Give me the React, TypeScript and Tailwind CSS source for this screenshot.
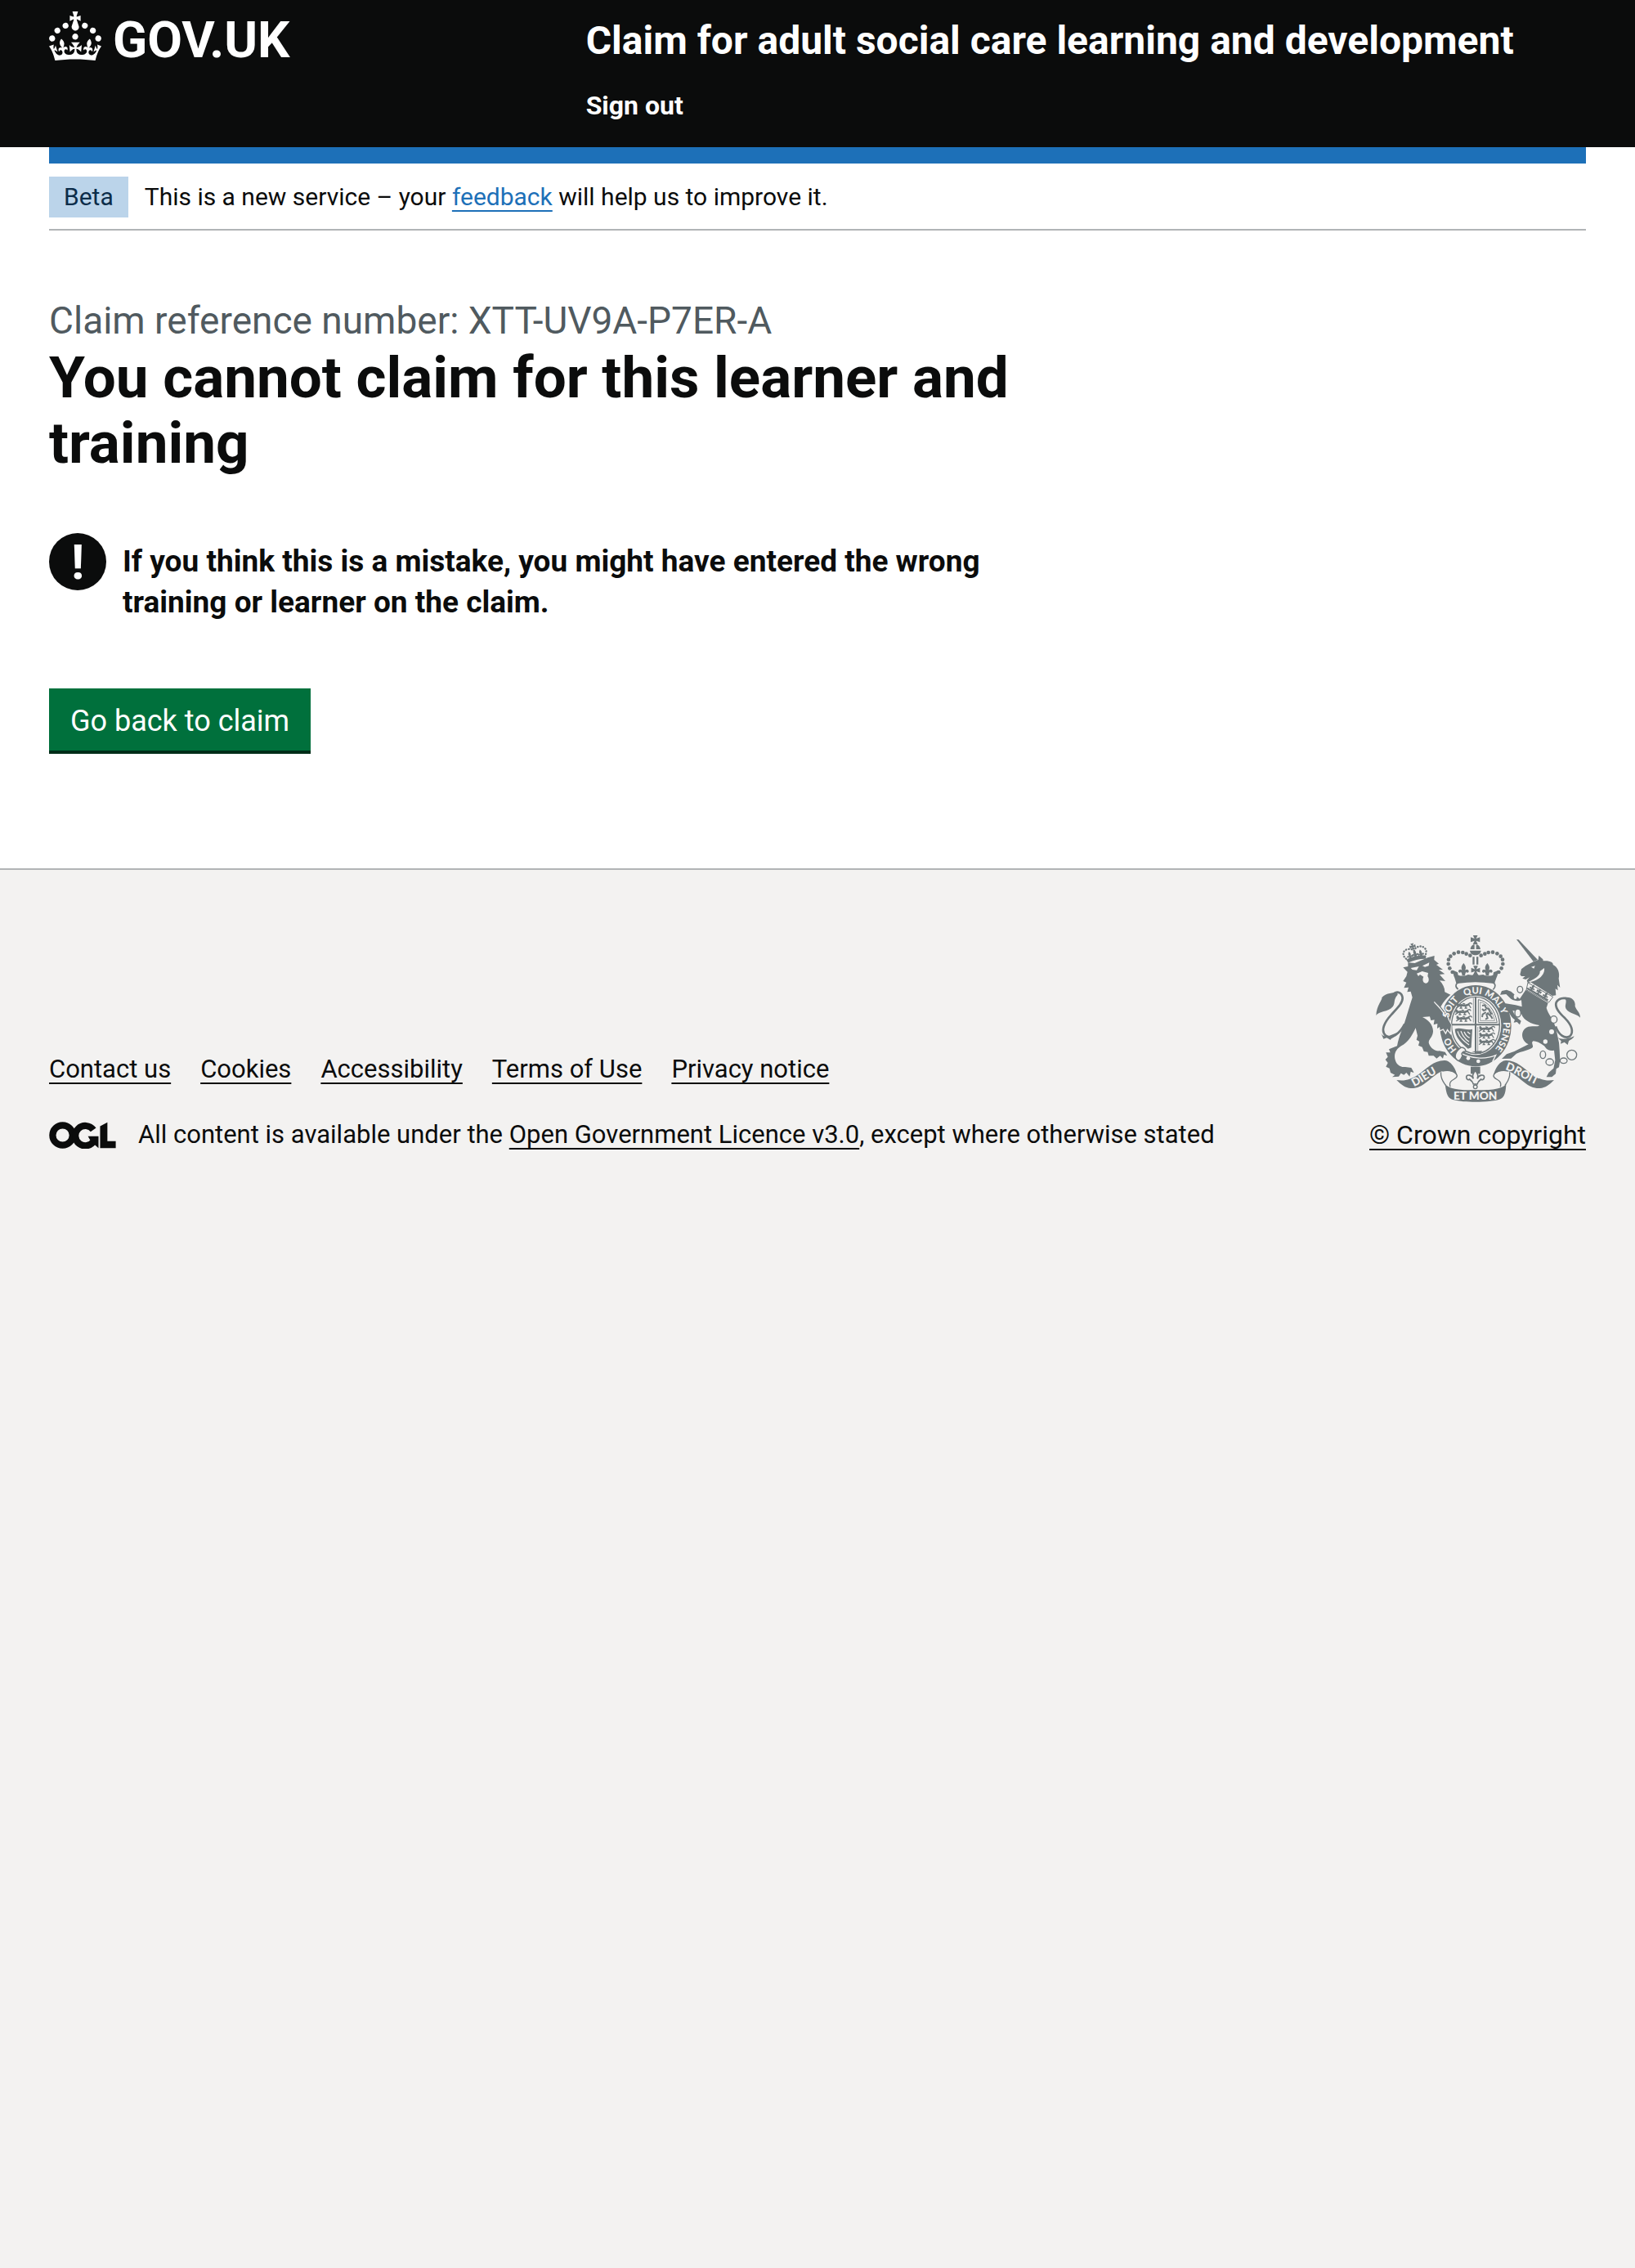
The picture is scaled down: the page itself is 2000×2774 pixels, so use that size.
import React from "react";

const INK = "#6e777a";
const PAPER = "#f3f2f1";

function CrownLogo() {
  return (
    <svg viewBox="0 0 32 30" className="h-[60px] w-16 shrink-0" fill="currentColor" aria-hidden="true">
      <path
        fillRule="evenodd"
        d="M22.6 10.4c-1 .4-2-.1-2.4-1-.4-.9.1-2 1-2.4.9-.4 2 .1 2.4 1s-.1 2-1 2.4m-5.9 6.7c-.9.4-2-.1-2.4-1-.4-.9.1-2 1-2.4.9-.4 2 .1 2.4 1s-.1 2-1 2.4m10.8-3.7c-1 .4-2-.1-2.4-1-.4-.9.1-2 1-2.4.9-.4 2 .1 2.4 1s0 2-1 2.4m3.3 4.8c-1 .4-2-.1-2.4-1-.4-.9.1-2 1-2.4.9-.4 2 .1 2.4 1s-.1 2-1 2.4M17 4.7l2.3 1.2V2.5l-2.3.7-.2-.2.9-3h-3.4l.9 3-.2.2c-.1.1-2.3-.7-2.3-.7v3.4L15 4.7c.1.1.1.2.2.2l-1.3 4c-.1.2-.1.4-.1.6 0 1.1.8 2 1.9 2.2h.7c1-.2 1.9-1.1 1.9-2.1 0-.2 0-.4-.1-.6l-1.3-4c-.1-.2 0-.2.1-.3m-7.6 5.7c.9.4 2-.1 2.4-1 .4-.9-.1-2-1-2.4-.9-.4-2 .1-2.4 1s0 2 1 2.4m-5 3c.9.4 2-.1 2.4-1 .4-.9-.1-2-1-2.4-.9-.4-2 .1-2.4 1s.1 2 1 2.4m-3.2 4.8c.9.4 2-.1 2.4-1 .4-.9-.1-2-1-2.4-.9-.4-2 .1-2.4 1s0 2 1 2.4m14.8 11c4.4 0 8.6.3 12.3.8 1.1-4.5 2.4-7 3.7-8.8l-2.5-.9c.2 1.3.3 1.9 0 2.7-.4-.4-.8-1.1-1.1-2.3l-1.2 4c.7-.5 1.3-.8 2-.9-1.1 2.5-2.6 3.1-3.5 3-1.1-.2-1.7-1.2-1.5-2.1.3-1.2 1.5-1.5 2.1-.1 1.1-2.3-.8-3-2-2.3 1.9-1.9 2.1-3.5.6-5.6-2.1 1.6-2.1 3.2-1.2 5.5-1.2-1.4-3.2-.6-2.5 1.6.9-1.4 2.1-.5 1.9.8-.2 1.1-1.7 2.1-3.5 1.9-2.7-.2-2.9-2.1-2.9-3.6.7-.1 1.9.5 2.9 1.9l.4-4.3c-1.1 1.1-2.1 1.4-3.2 1.4.4-1.2 2.1-3 2.1-3h-5.4s1.7 1.9 2.1 3c-1.1 0-2.1-.2-3.2-1.4l.4 4.3c1-1.4 2.2-2 2.9-1.9-.1 1.5-.2 3.4-2.9 3.6-1.9.2-3.4-.8-3.5-1.9-.2-1.3 1-2.2 1.9-.8.7-2.3-1.2-3-2.5-1.6.9-2.2.9-3.9-1.2-5.5-1.5 2-1.3 3.7.6 5.6-1.2-.7-3.1 0-2 2.3.6-1.4 1.8-1.1 2.1.1.2.9-.3 1.9-1.5 2.1-.9.2-2.4-.5-3.5-3 .6 0 1.2.3 2 .9l-1.2-4c-.3 1.1-.7 1.9-1.1 2.3-.3-.8-.2-1.4 0-2.7l-2.9.9C1.3 23 2.6 25.5 3.7 30c3.7-.5 7.9-.8 12.3-.8"
      />
    </svg>
  );
}

function OglLogo() {
  return (
    <svg viewBox="0 0 246 100" className="h-[33px] w-[82px] shrink-0" fill="none" stroke="currentColor" strokeWidth="25" role="img" aria-label="OGL">
      <circle cx="49" cy="50" r="37" />
      <path d="M163 30A37 37 0 1 0 165 71" />
      <path d="M143 54H182V98L164 82L150 66Z" fill="currentColor" stroke="none" />
      <path d="M188 17L215 2V72H246V98H188Z" fill="currentColor" stroke="none" />
    </svg>
  );
}

const pearls = [
  [353, 447], [343, 433], [338, 417], [339, 401], [346, 389],
  [359, 379], [375, 374], [391, 375], [404, 380], [418, 386],
];

const lionRows = [
  [362, 570], [358, 594], [362, 618], [446, 656], [446, 680], [446, 704],
];

function Patty({ x, y, s }: { x: number; y: number; s: number }) {
  return (
    <path
      transform={`translate(${x} ${y}) scale(${s})`}
      d="M-9-17H9L3-4 17-9V9L3 4 9 17H-9L-3 4-17 9V-9L-3-4Z"
    />
  );
}

function Fleur({ x, y, s }: { x: number; y: number; s: number }) {
  return (
    <path
      transform={`translate(${x} ${y}) scale(${s})`}
      d="M0-24C10-12 10-4 3 6C6-2 18-4 19 6C19 12 11 13 11 8C8 10 6 12 5 22H-5C-6 12-8 10-11 8C-11 13-19 12-19 6C-18-4-6-2-3 6C-10-4-10-12 0-24Z"
    />
  );
}

function SmallLion({ x, y }: { x: number; y: number }) {
  return (
    <g transform={`translate(${x} ${y})`} fill="none" stroke={INK} strokeWidth="5" strokeLinecap="round">
      <path d="M10-6L14 0L24-2L38 0L50-4" strokeWidth="8" />
      <path d="M8-9V0M14 2L6 8M24 2L20 9H26M42 0L38 9H44M52-2L58 7M50-6C54-12 60-10 62-6M30-8L36-6" strokeWidth="4" />
    </g>
  );
}

function Scroll() {
  return (
    <>
      <path
        fill={INK}
        d="M148 843C180 848 200 840 225 825C260 800 285 770 325 771C348 773 365 800 370 826C356 808 325 803 305 815C270 835 245 875 200 873C180 872 165 860 148 843Z"
      />
      <path
        fill="none"
        stroke={INK}
        strokeWidth="4"
        d="M311 814C308 838 320 850 328 862M316 810C342 804 367 812 370 827C371 843 336 838 345 868"
      />
    </>
  );
}

function Crest() {
  return (
    <svg viewBox="72 312 750 612" className="h-[204px] w-[250px]" fill={INK} aria-hidden="true">
      <defs>
        <path id="garter" d="M438 762A102 118 0 0 1 438 526A102 118 0 0 1 438 762" />
        <path id="dieu" d="M212 867C248 852 280 820 330 804" />
        <path id="droit" d="M546 805C588 816 622 848 700 876" />
      </defs>

      {/* imperial crown */}
      <Patty x={437} y={328} s={1} />
      <path d="M419 363C420 352 427 346 434 346V363ZM440 346C448 346 454 352 456 363H440ZM417 368H458C456 390 419 390 417 368Z" />
      {pearls.map(([x, y]) => (
        <React.Fragment key={`${x}-${y}`}>
          <circle cx={x} cy={y} r="7" />
          <circle cx={876 - x} cy={y} r="7" />
        </React.Fragment>
      ))}
      <path d="M427 391H434V419H427ZM441 391H448V419H441Z" />
      <Patty x={438} y={440} s={0.95} />
      <Fleur x={394} y={438} s={1} />
      <Fleur x={481} y={438} s={1} />
      <path d="M354 440L372 448L374 458C385 462 400 462 410 456L426 458L438 450L450 458L466 456C476 462 491 462 502 458L504 448L522 440C520 460 512 470 508 488C465 478 412 478 367 488C363 470 356 460 354 440Z" />
      <path d="M374 510C362 502 364 488 376 486C418 479 456 479 500 486C512 488 513 502 502 511" fill="none" stroke={INK} strokeWidth="5" />

      {/* garter and shield */}
      <ellipse cx="438" cy="644" rx="131" ry="149" />
      <ellipse cx="438" cy="642" rx="94" ry="109" fill={PAPER} />
      <ellipse cx="438" cy="642" rx="88" ry="104" fill="none" stroke={INK} strokeWidth="4" />
      <path d="M435 540H441V746H435ZM350 637H526V643H350Z" />
      <path d="M430 542V632M446 648V742" stroke={INK} strokeWidth="2" />
      {lionRows.map(([x, y]) => (
        <SmallLion key={`${x}-${y}`} x={x} y={y} />
      ))}
      <path d="M448 548C482 554 508 582 517 632H448Z" fill="none" stroke={INK} strokeWidth="3" />
      <path d="M455 557C478 562 500 586 508 625H455Z" fill="none" stroke={INK} strokeWidth="2" />
      <path d="M462 570L472 568L476 578L486 582L494 600L500 598M478 584L468 588L462 582M486 596L478 602L482 616L474 620M484 600L494 608L500 618M476 594L464 602L462 612" fill="none" stroke={INK} strokeWidth="6" />
      <path d="M362 656C380 648 404 662 426 656L422 724L410 728C388 708 364 690 362 656Z" />
      <path d="M372 664C378 686 394 700 414 714M384 664C390 680 400 694 414 702M396 666C400 676 406 684 416 688M408 666L418 674" fill="none" stroke={PAPER} strokeWidth="4" />
      <path d="M386 746C420 762 470 770 512 752L500 776" fill="none" stroke={PAPER} strokeWidth="4" />
      <path d="M424 738L462 736L456 748Z" />
      <path d="M374 772C354 760 366 736 384 724C394 722 404 730 400 738C388 738 384 748 390 752C386 762 384 770 374 772Z" fill={PAPER} stroke={INK} strokeWidth="4" />
      <circle cx="411" cy="763" r="7" fill={PAPER} />
      <circle cx="448" cy="774" r="7" fill={PAPER} />

      {/* lion */}
      <g transform="translate(216 398) rotate(-14)">
        <path d="M-32 -4C-10-10 12-10 42-2L38 10C15 4-5 4-28 8Z" />
        <g fill="none" stroke={INK} strokeWidth="7" strokeDasharray="1 9" strokeLinecap="round">
          <path d="M-32-8C-46-26-34-44-14-40C-4-38 0-34 3-30C10-40 30-46 42-32C50-22 46-12 40-4" />
        </g>
        <Patty x={2} y={-46} s={0.65} />
        <Fleur x={-16} y={-16} s={0.6} />
        <Fleur x={4} y={-18} s={0.65} />
        <Fleur x={25} y={-14} s={0.6} />
      </g>
      <path d="M326 524L348 530C332 544 322 556 314 574L326 594L346 640L345 668L334 655L328 668L320 655L308 660Z" stroke={PAPER} strokeWidth="8" />
      <path d="M172 430L190 426L190 412L215 414L262 394L287 387L286 402L303 416L294 420L318 438L303 438L325 454L306 456L327 480L306 478C318 490 325 505 325 520L346 530C332 542 320 555 310 574C325 592 334 605 338 622L348 640L345 668L334 655L328 668L320 655L308 660L306 648L297 654L298 636L284 640L287 622L274 624L270 610L243 612C262 620 283 640 282 665C280 690 260 695 268 712C275 728 290 738 305 736L326 740L334 754L322 750L318 764L308 754L295 764L284 754L266 754L262 740L248 738L242 722L228 716L232 702L221 695L225 680L218 652C205 680 190 705 165 718C148 728 138 745 142 765C146 785 160 797 180 795L202 798L212 816L200 812L196 830L184 816L175 824L164 818L156 830L132 832L142 824L126 816L122 800L109 794L116 780L107 768L116 758L109 742L125 742L120 730L150 718C155 690 165 665 176 637C186 605 196 570 206 540L200 518L187 520L192 503L175 505L184 485L172 480L184 462L188 446Z" />
      <path d="M200 432L230 426L222 440L206 438ZM243 424L268 412L266 424L252 428Z" fill={PAPER} />
      <path d="M222 452L242 444L264 450L262 462C270 474 266 488 255 488C244 486 242 474 247 464L234 456L228 462Z" fill={PAPER} />
      <path d="M286 556C305 578 322 592 328 612" fill="none" stroke={PAPER} strokeWidth="4" />
      <path d="M178 637C160 672 130 696 108 680C88 662 104 630 128 604C150 580 170 562 170 542C168 522 152 516 138 526" fill="none" stroke={INK} strokeWidth="8" />
      <path d="M150 518C135 526 112 520 94 540C98 546 74 570 73 606C82 590 118 594 134 574C144 560 136 546 152 530Z" />
      <path d="M90 668C94 682 110 686 122 680L152 668C140 690 126 688 126 696L112 688L100 692Z" />

      {/* garter motto */}
      <g fill={PAPER} fontFamily="Lato, sans-serif" fontWeight="900" fontSize="34" textAnchor="middle">
        <text><textPath href="#garter" startOffset="104">HO</textPath></text>
        <text><textPath href="#garter" startOffset="240">SOIT</textPath></text>
        <text><textPath href="#garter" startOffset="336">QUI</textPath></text>
        <text><textPath href="#garter" startOffset="414">MAL</textPath></text>
        <text><textPath href="#garter" startOffset="466">Y</textPath></text>
        <text><textPath href="#garter" startOffset="558">PENSE</textPath></text>
      </g>

      {/* unicorn */}
      <path d="M588 327L596 328L666 402L650 408Z" />
      <path d="M601 456L606 436L622 424L650 409L668 402L670 386L685 400L686 406C712 404 724 412 722 420C740 428 748 450 743 470L748 504L738 494L740 514L731 508L733 532L720 534L640 484L630 488L626 478L636 466L622 474L610 470L620 462L606 462Z" />
      <path d="M690 432C694 458 665 482 630 484C655 472 676 460 674 444ZM642 428L656 424L652 434Z" fill={PAPER} />
      <path d="M630 486L722 538L707 558L624 512Z" fill={PAPER} stroke={INK} strokeWidth="3" />
      <g transform="translate(670 520) rotate(30)">
        <path d="M-44 6H44V13H-44Z" />
        <Fleur x={-28} y={-2} s={0.55} />
        <Patty x={0} y={-2} s={0.55} />
        <Fleur x={28} y={-2} s={0.55} />
      </g>
      <path d="M622 512L704 560L698 578C704 600 722 620 728 640C736 660 740 690 744 706L746 732L748 770L744 796L734 802L732 820L718 832L698 832L706 816L724 800L730 770L726 734C700 738 695 724 690 718C675 706 660 700 650 700C640 705 650 715 648 722C640 732 605 738 588 746L568 764L534 765L552 748L580 738L632 712C606 700 600 665 625 650C642 642 668 650 672 642C640 636 615 625 606 600C594 592 585 590 574 588C580 605 590 616 605 626L600 640L590 630L578 632L582 622C565 610 560 590 548 576L532 570L548 562L585 568L608 574L606 550C590 556 572 552 560 538L550 528L528 530L534 516L552 512L568 518L600 545Z" />
      <path d="M732 646C742 676 765 694 784 682C800 666 790 640 766 616C742 594 728 576 734 558C742 542 762 540 776 545" fill="none" stroke={INK} strokeWidth="8" />
      <path d="M764 540C790 536 806 552 803 572C808 588 822 594 822 614C812 600 784 602 770 582C762 566 778 556 764 540Z" />
      <path d="M734 682C746 698 775 694 800 682C796 694 784 694 780 700L776 714L764 704L750 710L752 700Z" />
      <g fill={PAPER} stroke={INK} strokeWidth="4">
        <ellipse cx="601" cy="511" rx="10" ry="12" />
        <ellipse cx="593" cy="597" rx="11" ry="15" />
        <ellipse cx="725" cy="621" rx="12" ry="13" />
        <ellipse cx="685" cy="750" rx="10" ry="14" />
        <ellipse cx="710" cy="777" rx="14" ry="12" />
        <ellipse cx="761" cy="772" rx="13" ry="10" />
        <circle cx="791" cy="751" r="18" />
      </g>
      <g fill={PAPER}>
        <ellipse cx="584" cy="537" rx="6" ry="9" />
        <circle cx="717" cy="666" r="9" />
        <circle cx="694" cy="702" r="8" />
      </g>

      {/* motto scroll and badge */}
      <Scroll />
      <g transform="translate(874 0) scale(-1 1)">
        <Scroll />
      </g>
      <path d="M326 858C345 880 395 880 437 880C480 880 530 880 550 858C549 885 545 905 530 912C500 927 375 927 347 912C332 903 330 885 326 858Z" />
      <path d="M420 794H455V820H420Z" />
      <path d="M437 808C446 818 450 826 444 838C450 824 468 820 470 832C470 842 460 844 458 840C450 846 446 850 444 858H430C428 850 424 846 416 840C414 844 404 842 404 832C406 820 424 824 430 838C424 826 428 818 437 808Z" fill={PAPER} stroke={INK} strokeWidth="5" />
      <circle cx="437" cy="868" r="7" fill={PAPER} stroke={INK} strokeWidth="4" />
      <g fill={PAPER} fontFamily="Lato, sans-serif" fontWeight="900" fontSize="41">
        <text><textPath href="#dieu">DIEU</textPath></text>
        <text><textPath href="#droit">DROIT</textPath></text>
        <text x="437" y="915" textAnchor="middle">ET MON</text>
      </g>
    </svg>
  );
}

const footerLinks = ["Contact us", "Cookies", "Accessibility", "Terms of Use", "Privacy notice"];

export default function App() {
  return (
    <div className="flex min-h-screen flex-col bg-[#f3f2f1] font-['Roboto',sans-serif] text-[#0b0c0c]">
      <header className="bg-[#0b0c0c] px-[60px] text-white">
        <div className="flex pb-[31px]">
          <div className="w-1/3 pt-3.5">
            <a href="#" className="flex w-fit items-start gap-3.5" aria-label="GOV.UK">
              <CrownLogo />
              <span className="pt-1 text-[62px] leading-[62px] font-bold">GOV.UK</span>
            </a>
          </div>
          <div className="flex-1 pt-5 pl-[30px] font-bold">
            <a href="#" className="block text-[48px] leading-[60px]">
              Claim for adult social care learning and development
            </a>
            <nav className="mt-[29px]">
              <a href="#" className="block w-fit text-[32px] leading-10">Sign out</a>
            </nav>
          </div>
        </div>
      </header>

      <div className="bg-white px-[60px]">
        <div className="h-5 bg-[#1d70b8]" />
        <div className="flex items-center gap-5 border-b-2 border-[#b1b4b6] pt-4 pb-3.5 text-[30px] leading-[50px]">
          <strong className="bg-[#bbd4ea] px-[18px] font-normal text-[#0c2d4a]">Beta</strong>
          <span>
            This is a new service – your{" "}
            <a href="#" className="text-[#1d70b8] underline decoration-2 underline-offset-[6px] [text-decoration-skip-ink:none]">
              feedback
            </a>{" "}
            will help us to improve it.
          </span>
        </div>

        <main className="w-2/3 pt-20 pb-36">
          <h1 className="text-[71px] leading-20 font-bold">
            <span className="block text-[46px] leading-[60px] font-normal text-[#505a5f]">
              Claim reference number: XTT-UV9A-P7ER-A
            </span>
            You cannot claim for this learner and training
          </h1>
          <div className="mt-[70px] flex gap-5">
            <span
              className="size-[70px] shrink-0 rounded-full bg-[#0b0c0c] text-center text-[60px] leading-[72px] font-bold text-white"
              aria-hidden="true"
            >
              !
            </span>
            <strong className="pt-2.5 text-[37px] leading-[50px] font-bold">
              If you think this is a mistake, you might have entered the wrong training or learner on the claim.
            </strong>
          </div>
          <button
            type="button"
            className="mt-20 block h-[76px] bg-[#00703c] px-[26px] pt-1 text-[36px] text-white shadow-[0_4px_0_#002d18]"
          >
            Go back to claim
          </button>
        </main>
      </div>

      <footer className="flex grow items-start border-t-2 border-[#b1b4b6] px-[60px] pt-20 text-[31px] leading-10">
        <div className="flex grow items-end justify-between gap-10">
          <div>
            <ul className="flex flex-wrap gap-x-9" aria-label="Support links">
              {footerLinks.map((label) => (
                <li key={label}>
                  <a href="#" className="underline decoration-2 underline-offset-[6px] [text-decoration-skip-ink:none]">
                    {label}
                  </a>
                </li>
              ))}
            </ul>
            <div className="mt-10 flex items-center gap-[27px]">
              <OglLogo />
              <span>
                All content is available under the{" "}
                <a href="#" className="underline decoration-2 underline-offset-[6px] [text-decoration-skip-ink:none]">
                  Open Government Licence v3.0
                </a>
                , except where otherwise stated
              </span>
            </div>
          </div>
          <a
            href="#"
            className="flex flex-col items-center gap-5 text-[32px] underline decoration-2 underline-offset-[6px] [text-decoration-skip-ink:none]"
          >
            <Crest />
            <span>© Crown copyright</span>
          </a>
        </div>
      </footer>
    </div>
  );
}
